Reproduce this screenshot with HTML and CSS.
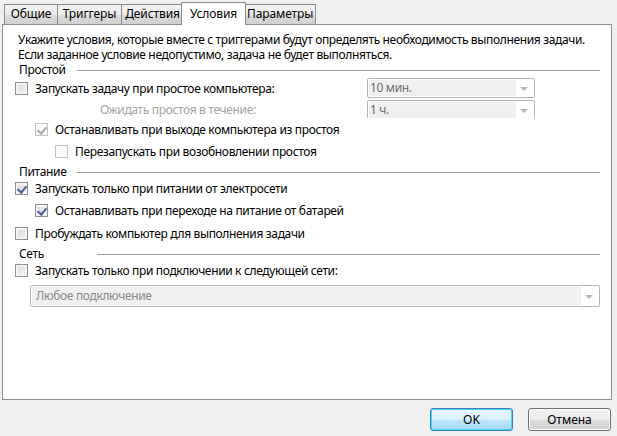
FILE: index.html
```html
<!DOCTYPE html>
<html lang="ru">
<head>
<meta charset="utf-8">
<link rel="stylesheet" href="styles.css">
</head>
<body>
<div class="dialog">
  <div class="tabs">
    <div class="tab t1">Общие</div>
    <div class="tab t2">Триггеры</div>
    <div class="tab t3">Действия</div>
    <div class="tab active t4">Условия</div>
    <div class="tab t5">Параметры</div>
  </div>
  <div class="panel">
    <p class="intro">Укажите условия, которые вместе с триггерами будут определять необходимость выполнения задачи.<br>Если заданное условие недопустимо, задача не будет выполняться.</p>

    <div class="section s-idle"><span class="sec-label w58">Простой</span><span class="sec-line"></span></div>
    <div class="row r-idle">
      <label class="check"><span class="box"></span>Запускать задачу при простое компьютера:</label>
      <div class="combo combo-small"><span class="combo-text">10 мин.</span><span class="arrow"></span></div>
    </div>
    <div class="row r-wait">
      <span class="muted wait-label">Ожидать простоя в течение:</span>
      <div class="combo combo-small clipped"><span class="combo-text">1 ч.</span><span class="arrow"></span></div>
    </div>
    <div class="row r-stop indent1">
      <label class="check"><span class="box disabled checked"></span>Останавливать при выходе компьютера из простоя</label>
    </div>
    <div class="row r-restart indent2">
      <label class="check"><span class="box disabled"></span>Перезапускать при возобновлении простоя</label>
    </div>

    <div class="section s-power"><span class="sec-label w58">Питание</span><span class="sec-line"></span></div>
    <div class="row r-ac">
      <label class="check"><span class="box checked"></span>Запускать только при питании от электросети</label>
    </div>
    <div class="row r-bat indent1">
      <label class="check"><span class="box checked"></span>Останавливать при переходе на питание от батарей</label>
    </div>
    <div class="row r-wake">
      <label class="check"><span class="box"></span>Пробуждать компьютер для выполнения задачи</label>
    </div>

    <div class="section s-net"><span class="sec-label w78">Сеть</span><span class="sec-line"></span></div>
    <div class="row r-net">
      <label class="check"><span class="box"></span>Запускать только при подключении к следующей сети:</label>
    </div>
    <div class="combo combo-wide"><span class="combo-text">Любое подключение</span><span class="arrow"></span></div>
  </div>
  <div class="buttons">
    <button class="btn default">OK</button>
    <button class="btn">Отмена</button>
  </div>
</div>
</body>
</html>
```

FILE: styles.css
```css
* { box-sizing: border-box; }
html, body {
  margin: 0;
  padding: 0;
  background: #f0f0f0;
  width: 617px;
  height: 436px;
  overflow: hidden;
}
body {
  font-family: "Noto Sans", "Open Sans", "DejaVu Sans", sans-serif;
  font-size: 12px;
  color: #000;
  letter-spacing: -0.35px;
}
.dialog {
  display: flex;
  flex-direction: column;
  height: 436px;
}
.tabs {
  display: flex;
  align-items: flex-end;
  height: 25px;
  padding-left: 4px;
  position: relative;
  z-index: 1;
}
.tab {
  height: 20px;
  line-height: 18px;
  padding: 0 2px;
  border: 1px solid #898c95;
  border-bottom: none;
  margin-right: -1px;
  background: linear-gradient(#f3f3f3, #ebebeb 50%, #dddddd 51%, #cfcfcf);
  text-align: center;
  margin-bottom: 1px;
  letter-spacing: -0.1px;
}
.t1 { width: 54px; }
.t2 { width: 65px; }
.t3 { width: 63px; }
.t5 { width: 72px; }
.tab.active {
  height: 23px;
  margin-bottom: 0;
  background: #fff;
  line-height: 22px;
  position: relative;
  z-index: 2;
  margin-left: -2px;
  margin-right: -2px;
  width: 65px;
}
.panel {
  margin: -1px 5px 0 2px;
  height: 376px;
  border: 1px solid #898c95;
  background: #fff;
  padding: 7px 11px 0 12px;
}
.intro {
  margin: 0 0 0 3px;
  line-height: 15px;
}
.section {
  display: flex;
  align-items: center;
  height: 15px;
  line-height: 15px;
  padding-left: 4px;
}
.sec-label { flex: none; }
.w58 { width: 58px; }
.w78 { width: 78px; }
.sec-line {
  flex: 1;
  height: 1px;
  background: #a0a0a0;
  margin-top: 1px;
}
.row {
  display: flex;
  align-items: center;
  height: 20px;
  position: relative;
}
.indent1 { padding-left: 20px; }
.indent2 { padding-left: 40px; }
.check {
  display: flex;
  align-items: center;
}
.box {
  width: 13px;
  height: 13px;
  border: 1px solid #8e8f8f;
  margin-right: 7px;
  flex: none;
  position: relative;
  background: linear-gradient(135deg, #d6d6d6, #f7f7f7);
  box-shadow: inset 0 0 0 2px #f4f4f4;
}
.box.disabled {
  border-color: #c2c2c2;
  background: #fbfbfb;
  box-shadow: inset 0 0 0 2px #fbfbfb;
}
.box.checked::after {
  content: "";
  position: absolute;
  left: 3px;
  top: 1px;
  width: 4px;
  height: 7px;
  border-right: 2px solid #4a5f97;
  border-bottom: 2px solid #4a5f97;
  transform: rotate(40deg);
}
.box.disabled.checked::after {
  border-color: #a9a9a9;
}
.muted { color: #a3a3a3; }
.r-idle { margin-top: 1px; }
.r-idle .combo { margin-left: auto; margin-right: 65px; }
.r-wait { margin-top: 2px; height: 18px; }
.wait-label { margin-left: 85px; }
.r-wait .combo { margin-left: auto; margin-right: 65px; }
.r-stop { margin-top: 1px; }
.r-restart { margin-top: 2px; }
.s-power { margin-top: 3px; }
.r-ac { margin-top: -1px; }
.r-bat { margin-top: 2px; }
.r-wake { margin-top: 3px; }
.s-net { margin-top: 3px; }
.r-net { margin-top: -1px; }
.combo {
  position: relative;
  height: 20px;
  border: 1px solid #b5b5b5;
  border-radius: 2px;
  background: #fff;
  padding: 1px 18px 1px 1px;
  display: flex;
}
.combo-text {
  flex: 1;
  background: #f0f0f0;
  color: #6d6d6d;
  line-height: 16px;
  padding-left: 1px;
}
.combo-small { width: 168px; }
.combo.clipped {
  height: 18px;
  border-bottom: none;
  border-radius: 2px 2px 0 0;
  padding-bottom: 0;
}
.arrow {
  position: absolute;
  right: 6px;
  top: 8px;
  width: 0;
  height: 0;
  border-left: 4px solid transparent;
  border-right: 4px solid transparent;
  border-top: 4px solid #b8b8b8;
}
.combo-wide {
  margin: 5px 0 0 15px;
  height: 22px;
  flex: none;
}
.combo-wide .combo-text { color: #8a8a8a; line-height: 18px; padding-left: 4px; }
.combo-wide .arrow { top: 9px; }
.buttons {
  display: flex;
  justify-content: flex-end;
  gap: 15px;
  padding: 8px 6px 0 0;
}
.btn {
  width: 83px;
  height: 23px;
  font-family: inherit;
  font-size: 12px;
  color: #000;
  border: 1px solid #707070;
  border-radius: 3px;
  background: linear-gradient(#f2f2f2, #ebebeb 50%, #dddddd 51%, #cfcfcf);
  box-shadow: inset 0 0 0 1px #fcfcfc;
  padding: 0;
}
.btn.default {
  border-color: #3c7fb1;
  box-shadow: inset 0 0 0 1px #48d5fb;
  background: linear-gradient(#eaf6fd, #d9f0fc 50%, #bee6fd 51%, #a7d9f5);
}
```
